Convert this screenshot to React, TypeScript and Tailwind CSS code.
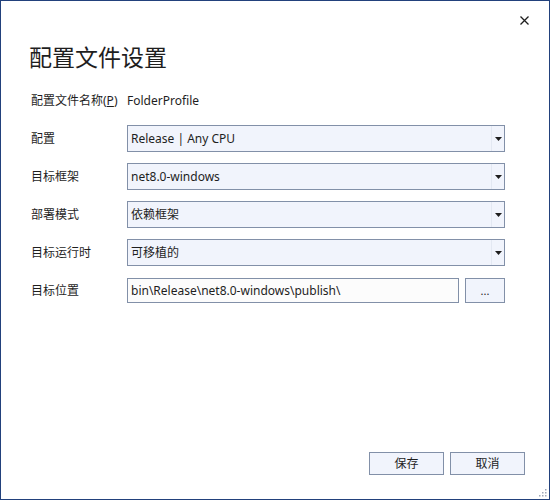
type Field = {
    label: string;
    value: string;
};

const combos: Field[] = [
    { label: "配置", value: "Release | Any CPU" },
    { label: "目标框架", value: "net8.0-windows" },
    { label: "部署模式", value: "依赖框架" },
    { label: "目标运行时", value: "可移植的" },
];

function ComboBox({ value }: { value: string }) {
    return (
        <div className="flex h-[27px] items-center border border-[#8290a8] bg-[#f1f4fc]">
            <span className="flex-1 truncate pl-[3px] text-[12px] text-[#1e1e1e]">
                {value}
            </span>
            <div className="flex h-full w-[13px] items-center justify-center border-l border-[#e3e8f2]">
                <svg width="7" height="4" viewBox="0 0 7 4">
                    <path d="M0 0h7L3.5 4z" fill="#1e1e1e" />
                </svg>
            </div>
        </div>
    );
}

export default function App() {
    return (
        <div className="relative flex h-[500px] w-[550px] flex-col border border-[#22417c] bg-white font-['Noto_Sans','Noto_Sans_CJK_SC',sans-serif] text-[#1e1e1e]">
            {/* title bar */}
            <div className="flex justify-end pr-[19px] pt-[12px]">
                <button type="button" className="flex h-[14px] w-[12px] items-center justify-center">
                    <svg width="9" height="9" viewBox="0 0 9 9">
                        <path d="M0.5 0.5l8 8M8.5 0.5l-8 8" stroke="#1e1e1e" strokeWidth="1.3" />
                    </svg>
                </button>
            </div>

            <h1 className="mt-[13px] pl-[28px] text-[23px] font-normal leading-[32px] font-['Noto_Sans_CJK_SC',sans-serif]">
                配置文件设置
            </h1>

            <div className="mt-[15px] grid grid-cols-[96px_378px] gap-y-[11px] pl-[30px] text-[12px]">
                <div className="flex h-[27px] items-center">
                    配置文件名称(<span className="underline">P</span>)
                </div>
                <div className="flex h-[27px] items-center">FolderProfile</div>

                {combos.map((f) => (
                    <div key={f.label} className="contents">
                        <div className="flex h-[27px] items-center">{f.label}</div>
                        <ComboBox value={f.value} />
                    </div>
                ))}

                <div className="flex h-[27px] items-center">目标位置</div>
                <div className="flex h-[27px] items-center gap-[6px]">
                    <div className="flex h-[25px] flex-1 items-center border border-[#8290a8] bg-[#fcfcfc] pl-[3px]">
                        bin\Release\net8.0-windows\publish\
                    </div>
                    <button
                        type="button"
                        className="flex h-[25px] w-[40px] items-center justify-center border border-[#8290a8] bg-[#f1f4fc] text-[11px] leading-none"
                    >
                        ...
                    </button>
                </div>
            </div>

            <div className="mt-auto flex justify-end gap-[6px] pb-[24px] pr-[24px]">
                <button
                    type="button"
                    className="h-[23px] w-[75px] border border-[#8290a8] bg-[#f1f4fc] text-[12px]"
                >
                    保存
                </button>
                <button
                    type="button"
                    className="h-[23px] w-[75px] border border-[#8290a8] bg-[#f1f4fc] text-[12px]"
                >
                    取消
                </button>
            </div>

            {/* resize grip */}
            <svg className="absolute bottom-[2px] right-[2px]" width="9" height="9" viewBox="0 0 9 9">
                {[
                    [7, 1], [7, 4], [4, 4], [7, 7], [4, 7], [1, 7],
                ].map(([x, y]) => (
                    <rect key={`${x}-${y}`} x={x} y={y} width="1.5" height="1.5" fill="#a0a8b8" />
                ))}
            </svg>
        </div>
    );
}
